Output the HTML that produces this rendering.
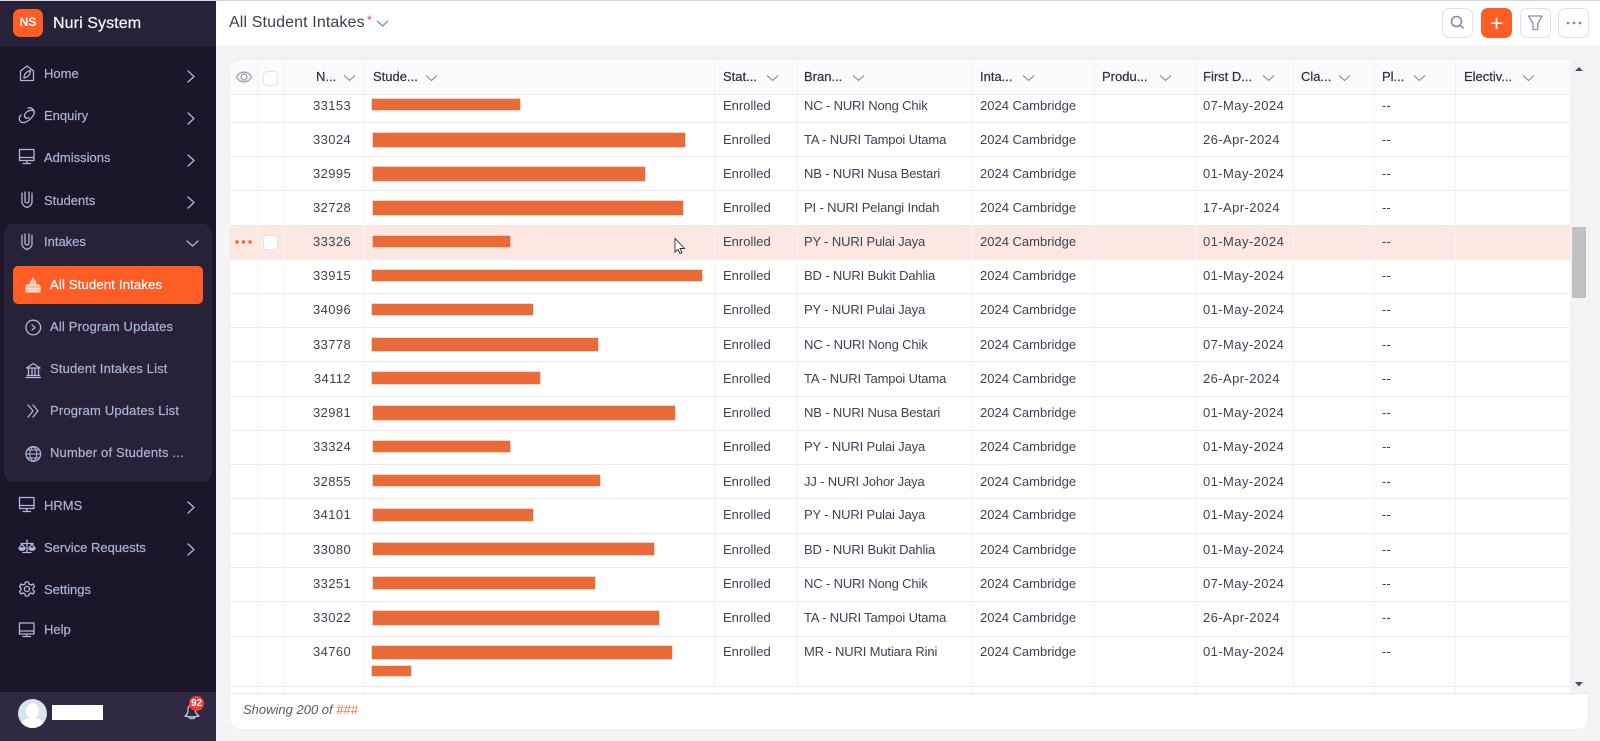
<!DOCTYPE html>
<html lang="en"><head><meta charset="utf-8"><title>All Student Intakes</title>
<style>
*{box-sizing:border-box}
html,body{margin:0;padding:0;width:1600px;height:741px;overflow:hidden;background:#f4f4f7;font-family:"Liberation Sans",sans-serif;font-size:13px;color:#3d4256}
.a{position:absolute}
#side{left:0;top:0;width:216px;height:741px;background:#1b1629}
#sh{left:0;top:1px;width:216px;height:45px;background:#282238}
#sf{left:0;top:692px;width:216px;height:49px;background:#2f2942}
#box{left:4px;top:224px;width:208px;height:258px;background:#282238;border-radius:9px}
#act{left:13px;top:266px;width:190px;height:38px;background:#ff5c26;border-radius:5px}
.m{position:absolute;left:44px;height:20px;line-height:20px;color:#a9b4d6;white-space:nowrap;-webkit-text-stroke:.2px #a9b4d6}
.m.s{left:50px;letter-spacing:.17px}
#logo{left:13px;top:9px;width:30px;height:28px;background:#ff5c26;border-radius:7px;color:#fff;font-weight:bold;font-size:12px;line-height:27px;text-align:center}
#brand{left:53px;top:14px;height:20px;line-height:20px;font-size:16px;letter-spacing:.1px;color:#f1f1f6;-webkit-text-stroke:.25px #f1f1f6;white-space:nowrap}
#top{left:216px;top:1px;width:1384px;height:44px;background:#fff}
#title{left:229px;top:13px;height:20px;line-height:20px;font-size:16px;letter-spacing:.12px;color:#3a3f50;white-space:nowrap}
#star{left:367px;top:14px;font-size:12px;line-height:12px;color:#f0453a}
.btn{position:absolute;top:8px;width:31px;height:30px;background:#fff;border:1px solid #dfe0e8;border-radius:7px}
#card{left:230px;top:60px;width:1358px;height:669px;background:#fff;border-radius:10px;box-shadow:0 0 0 1px #eeeef3;overflow:hidden}
#hd{left:230px;top:60px;width:1340px;height:34px;background:#fbfbfd;border-radius:10px 0 0 0}
#track{left:1570px;top:60px;width:18px;height:633px;background:#f3f3f6}
#thumb{left:1572px;top:227px;width:14px;height:71px;background:#c1c1c1}
#fl{left:230px;top:693px;width:1358px;height:1px;background:#e8e8ee}
#foot{left:243px;top:701px;height:18px;line-height:18px;font-style:italic;color:#555b6c;white-space:nowrap}
#foot span{color:#ff6a3c}
#hov{left:230px;top:225px;width:1340px;height:34px;background:#fde7e1}
.l{position:absolute;left:230px;width:1340px;height:1px;background:#ebebf0}
.v{position:absolute;top:60px;width:1px;height:633px;background:#f3f3f6}
.h{position:absolute;top:68px;height:18px;line-height:18px;color:#2c2f40;-webkit-text-stroke:.2px #2c2f40;white-space:nowrap}
.r{position:absolute;left:0;top:0;height:34px;line-height:34px;white-space:nowrap;color:#3d4256}
.r b{font-weight:normal;position:absolute;top:0}
.c1{left:313px;width:38px;text-align:right;letter-spacing:.4px}
.c2{left:723px}.c3{left:804px;letter-spacing:-.15px}.c4{left:980px}.c5{left:1203px;letter-spacing:.42px}.c6{left:1382px}
.bar{position:absolute;background:#e96b39;box-shadow:0 0 0 .5px #f5a98c}
.cb{position:absolute;left:263px;width:15px;height:15px;border:1px solid #e3e3ea;border-radius:4px;background:#fff}
#ava{left:18px;top:699px;width:29px;height:29px;border-radius:50%;background:#d8e3ea;overflow:hidden}
#ava i{position:absolute;left:8px;top:4px;width:13px;height:16px;border-radius:50%;background:#fff}
#ava u{position:absolute;left:3px;top:19px;width:23px;height:14px;border-radius:50% 50% 0 0;background:#fff}
#nm{left:52px;top:705px;width:51px;height:15px;background:#fff}
#bd{left:189px;top:696px;width:15px;height:15px;border-radius:50%;background:#f23d3d;color:#fff;font-size:10px;font-weight:bold;line-height:15px;text-align:center}
svg{position:absolute;left:0;top:0}
</style></head><body>
<div class="a" id="side"></div><div class="a" id="sh"></div><div class="a" id="sf"></div><div class="a" id="box"></div><div class="a" id="act"></div>
<div class="a" id="logo">NS</div><div class="a" id="brand">Nuri System</div>
<div class="m" style="top:64px">Home</div>
<div class="m" style="top:106px">Enquiry</div>
<div class="m" style="top:148px">Admissions</div>
<div class="m" style="top:191px">Students</div>
<div class="m" style="top:232px">Intakes</div>
<div class="m s" style="top:275px;color:#fff;-webkit-text-stroke:.25px #fff;letter-spacing:.2px">All Student Intakes</div>
<div class="m s" style="top:317px">All Program Updates</div>
<div class="m s" style="top:359px">Student Intakes List</div>
<div class="m s" style="top:401px">Program Updates List</div>
<div class="m s" style="top:443px">Number of Students ...</div>
<div class="m" style="top:496px">HRMS</div>
<div class="m" style="top:538px">Service Requests</div>
<div class="m" style="top:580px">Settings</div>
<div class="m" style="top:620px">Help</div>
<div class="a" id="ava"><i></i><u></u></div><div class="a" id="nm"></div>

<div class="a" id="top"></div>
<div class="a" id="title">All Student Intakes</div><div class="a" id="star">*</div>
<div class="btn" style="left:1442px"></div>
<div class="btn" style="left:1481px;background:#ff5c26;border-color:#ff5c26"></div>
<div class="btn" style="left:1520px"></div>
<div class="btn" style="left:1558px"></div>

<div class="a" id="card"></div>
<div class="a" id="hd"></div>
<div class="a" id="track"></div><div class="a" id="thumb"></div>
<div class="a" id="hov"></div>
<div class="l" style="top:94px"></div><div class="l" style="top:122px"></div><div class="l" style="top:156px"></div><div class="l" style="top:190px"></div><div class="l" style="top:225px"></div><div class="l" style="top:259px"></div><div class="l" style="top:293px"></div><div class="l" style="top:327px"></div><div class="l" style="top:361px"></div><div class="l" style="top:396px"></div><div class="l" style="top:430px"></div><div class="l" style="top:464px"></div><div class="l" style="top:498px"></div><div class="l" style="top:533px"></div><div class="l" style="top:567px"></div><div class="l" style="top:601px"></div><div class="l" style="top:636px"></div><div class="l" style="top:686px"></div>
<div class="v" style="left:257px"></div><div class="v" style="left:283px"></div><div class="v" style="left:364px"></div><div class="v" style="left:714px"></div><div class="v" style="left:797px"></div><div class="v" style="left:972px"></div><div class="v" style="left:1094px"></div><div class="v" style="left:1195px"></div><div class="v" style="left:1293px"></div><div class="v" style="left:1374px"></div><div class="v" style="left:1455px"></div>
<div class="a" id="fl"></div>
<div class="a" id="foot">Showing 200 of <span>###</span></div>

<div class="h" style="left:316px">N...</div>
<div class="h" style="left:373px">Stude...</div>
<div class="h" style="left:723px">Stat...</div>
<div class="h" style="left:804px">Bran...</div>
<div class="h" style="left:980px">Inta...</div>
<div class="h" style="left:1102px">Produ...</div>
<div class="h" style="left:1203px">First D...</div>
<div class="h" style="left:1301px">Cla...</div>
<div class="h" style="left:1382px">Pl...</div>
<div class="h" style="left:1464px">Electiv...</div>

<div class="cb" style="top:71px"></div>
<div class="cb" style="top:235px"></div>

<div class="r" style="top:89px"><b class="c1">33153</b><b class="c2">Enrolled</b><b class="c3">NC - NURI Nong Chik</b><b class="c4">2024 Cambridge</b><b class="c5">07-May-2024</b><b class="c6">--</b></div>
<div class="r" style="top:123px"><b class="c1">33024</b><b class="c2">Enrolled</b><b class="c3">TA - NURI Tampoi Utama</b><b class="c4">2024 Cambridge</b><b class="c5">26-Apr-2024</b><b class="c6">--</b></div>
<div class="r" style="top:157px"><b class="c1">32995</b><b class="c2">Enrolled</b><b class="c3">NB - NURI Nusa Bestari</b><b class="c4">2024 Cambridge</b><b class="c5">01-May-2024</b><b class="c6">--</b></div>
<div class="r" style="top:191px"><b class="c1">32728</b><b class="c2">Enrolled</b><b class="c3">PI - NURI Pelangi Indah</b><b class="c4">2024 Cambridge</b><b class="c5">17-Apr-2024</b><b class="c6">--</b></div>
<div class="r" style="top:225px"><b class="c1">33326</b><b class="c2">Enrolled</b><b class="c3">PY - NURI Pulai Jaya</b><b class="c4">2024 Cambridge</b><b class="c5">01-May-2024</b><b class="c6">--</b></div>
<div class="r" style="top:259px"><b class="c1">33915</b><b class="c2">Enrolled</b><b class="c3">BD - NURI Bukit Dahlia</b><b class="c4">2024 Cambridge</b><b class="c5">01-May-2024</b><b class="c6">--</b></div>
<div class="r" style="top:293px"><b class="c1">34096</b><b class="c2">Enrolled</b><b class="c3">PY - NURI Pulai Jaya</b><b class="c4">2024 Cambridge</b><b class="c5">01-May-2024</b><b class="c6">--</b></div>
<div class="r" style="top:328px"><b class="c1">33778</b><b class="c2">Enrolled</b><b class="c3">NC - NURI Nong Chik</b><b class="c4">2024 Cambridge</b><b class="c5">07-May-2024</b><b class="c6">--</b></div>
<div class="r" style="top:362px"><b class="c1">34112</b><b class="c2">Enrolled</b><b class="c3">TA - NURI Tampoi Utama</b><b class="c4">2024 Cambridge</b><b class="c5">26-Apr-2024</b><b class="c6">--</b></div>
<div class="r" style="top:396px"><b class="c1">32981</b><b class="c2">Enrolled</b><b class="c3">NB - NURI Nusa Bestari</b><b class="c4">2024 Cambridge</b><b class="c5">01-May-2024</b><b class="c6">--</b></div>
<div class="r" style="top:430px"><b class="c1">33324</b><b class="c2">Enrolled</b><b class="c3">PY - NURI Pulai Jaya</b><b class="c4">2024 Cambridge</b><b class="c5">01-May-2024</b><b class="c6">--</b></div>
<div class="r" style="top:465px"><b class="c1">32855</b><b class="c2">Enrolled</b><b class="c3">JJ - NURI Johor Jaya</b><b class="c4">2024 Cambridge</b><b class="c5">01-May-2024</b><b class="c6">--</b></div>
<div class="r" style="top:498px"><b class="c1">34101</b><b class="c2">Enrolled</b><b class="c3">PY - NURI Pulai Jaya</b><b class="c4">2024 Cambridge</b><b class="c5">01-May-2024</b><b class="c6">--</b></div>
<div class="r" style="top:533px"><b class="c1">33080</b><b class="c2">Enrolled</b><b class="c3">BD - NURI Bukit Dahlia</b><b class="c4">2024 Cambridge</b><b class="c5">01-May-2024</b><b class="c6">--</b></div>
<div class="r" style="top:567px"><b class="c1">33251</b><b class="c2">Enrolled</b><b class="c3">NC - NURI Nong Chik</b><b class="c4">2024 Cambridge</b><b class="c5">07-May-2024</b><b class="c6">--</b></div>
<div class="r" style="top:601px"><b class="c1">33022</b><b class="c2">Enrolled</b><b class="c3">TA - NURI Tampoi Utama</b><b class="c4">2024 Cambridge</b><b class="c5">26-Apr-2024</b><b class="c6">--</b></div>
<div class="r" style="top:635px"><b class="c1">34760</b><b class="c2">Enrolled</b><b class="c3">MR - NURI Mutiara Rini</b><b class="c4">2024 Cambridge</b><b class="c5">01-May-2024</b><b class="c6">--</b></div>

<div class="bar" style="left:372px;top:99px;width:148px;height:11px"></div>
<div class="bar" style="left:373px;top:133px;width:312px;height:14px"></div>
<div class="bar" style="left:373px;top:167px;width:272px;height:14px"></div>
<div class="bar" style="left:373px;top:201px;width:310px;height:14px"></div>
<div class="bar" style="left:373px;top:236px;width:137px;height:11px"></div>
<div class="bar" style="left:372px;top:270px;width:330px;height:11px"></div>
<div class="bar" style="left:372px;top:304px;width:161px;height:11px"></div>
<div class="bar" style="left:372px;top:338px;width:226px;height:13px"></div>
<div class="bar" style="left:372px;top:372px;width:168px;height:12px"></div>
<div class="bar" style="left:373px;top:406px;width:302px;height:14px"></div>
<div class="bar" style="left:373px;top:441px;width:137px;height:11px"></div>
<div class="bar" style="left:373px;top:475px;width:227px;height:11px"></div>
<div class="bar" style="left:373px;top:509px;width:160px;height:12px"></div>
<div class="bar" style="left:373px;top:543px;width:281px;height:12px"></div>
<div class="bar" style="left:373px;top:577px;width:222px;height:12px"></div>
<div class="bar" style="left:373px;top:611px;width:286px;height:14px"></div>
<div class="bar" style="left:372px;top:646px;width:300px;height:13px"></div>
<div class="bar" style="left:372px;top:666px;width:39px;height:10px"></div>

<svg width="1600" height="741" viewBox="0 0 1600 741" fill="none">
 <rect x="0" y="0" width="1600" height="1" fill="#d6d6dc"/>
 <!-- sidebar icons -->
 <g stroke="#aeb8da" stroke-width="1.3" stroke-linejoin="round" stroke-linecap="round">
  <path d="M20.500 80.500V71L27 66L33.500 71V80.500Z"/><path d="M24 78C24 74 26 72 30.500 70.500C30.500 75 28 77 24 78Z"/>
  <path d="M21 115C18 118 19 123 24 122.500C28 122 32 118 34 114C35 110 32 107 28 108M34 111C30 109 25 112 24.500 115.500C24.500 118 27 119 29 117.500"/>
  <path d="M19.500 149.500H34V160.500H19.500ZM19.500 157.500H34M26.800 160.500V163M23 163.500H30.500"/>
  <path d="M22 193V202C22 205 24.500 206.500 27 207.500C29.500 206.500 32 205 32 202V193M25 192V201C25 203.500 29 203.500 29 201V192"/>
  <path d="M22 235V244C22 247 24.500 248.500 27 249.500C29.500 248.500 32 247 32 244V235M25 234V243C25 245.500 29 245.500 29 243V234"/>
  <path d="M19.500 497.500H34V508.500H19.500ZM19.500 505.500H34M26.800 508.500V511M23 511.500H30.500"/>
  <path d="M27 540V552M23 552.500H31M21 543.500H33M22 544L19 548M22 544L25 548M32 544L29 548M32 544L35 548"/>
  <path d="M19 548H25C25 551 19 551 19 548ZM29 548H35C35 551 29 551 29 548Z" fill="#aeb8da"/>
  <circle cx="27" cy="589" r="2.600"/><path d="M25.500 582H28.500L29 584L31 585L33 584L34.500 586.500L33 588L33 590L34.500 591.500L33 594L31 593L29 594L28.500 596H25.500L25 594L23 593L21 594L19.500 591.500L21 590L21 588L19.500 586.500L21 584L23 585L25 584Z"/>
  <path d="M19.500 623H34V634H19.500ZM19.500 631H34M26.800 634V636M23 636.500H30.500"/>
  <circle cx="33.300" cy="327.500" r="7.300"/><path d="M32 325L35 327.500L32 330"/>
  <path d="M26.500 368L33.300 363.500L40 368ZM28.500 369V375M32 369V375M35 369V375M38.500 369V375M27 375.500H39.500M26 377.500H40.500"/>
  <path d="M28 405L33 411L28 417M33 405L38 411L33 417"/>
  <circle cx="33.300" cy="454" r="7.300"/><path d="M26 454H40.500M33.300 446.700C28.500 450 28.500 458 33.300 461.300C38 458 38 450 33.300 446.700M27.500 450H39M27.500 458H39" stroke-width="1"/>
  <path d="M188 71L194 76.500L188 82M188 113L194 118.500L188 124M188 155L194 160.500L188 166M188 197L194 202.500L188 208M188 502L194 507.500L188 513M188 544L194 549.500L188 555"/>
  <path d="M187 241L192.500 246L198 241"/>
 </g>
 <g stroke="#ffe3d8" stroke-width="1.200" stroke-linejoin="round">
  <path d="M30.500 285V282L33 279L35.500 282V285M33 277.500V279" fill="#ffb79e"/>
  <path d="M27 285H39L40 287V292H26V287ZM26 288.500H40M29 290.500H37" fill="#ffb79e"/>
 </g>
 <!-- bell -->
 <g stroke="#cfd5e6" stroke-width="1.200" stroke-linejoin="round"><path d="M185 716C188 714 188 712 188 709C188 706 190 705 191 705C193 705 195 707 195 709C195 712 196 714 199 716C195 717 189 717 185 716ZM189 717.500C190 719 194 719 195 717.500"/></g>
 <!-- title chevron -->
 <path d="M377 21L382.500 26L388 21" stroke="#70758a" stroke-width="1.100"/>
 <!-- top buttons -->
 <circle cx="1456.500" cy="21.500" r="5" stroke="#7c89a2" stroke-width="1.500"/><path d="M1460 25L1463.500 28.500" stroke="#7c89a2" stroke-width="1.500"/>
 <path d="M1496.500 17.500V29M1491 23.200H1502.500" stroke="#fff" stroke-width="1.700"/>
 <path d="M1528.500 16H1542L1537.800 23.500V29.500H1533V23.500Z" stroke="#8290a8" stroke-width="1.300" stroke-linejoin="round"/>
 <circle cx="1568" cy="23" r="1.400" fill="#8a8fa0"/><circle cx="1574" cy="23" r="1.400" fill="#8a8fa0"/><circle cx="1580" cy="23" r="1.400" fill="#8a8fa0"/>
 <!-- eye -->
 <path d="M236.500 77C240 70.500 248 70.500 251.500 77C248 83.500 240 83.500 236.500 77Z" stroke="#a4a9b9" stroke-width="1.400"/><circle cx="244" cy="77" r="3" stroke="#a4a9b9" stroke-width="1.400"/>
 <!-- header chevrons -->
 <g stroke="#7a7f92" stroke-width="1">
  <path d="M344 75.500L349.500 80.500L355 75.500M426 75.500L431.500 80.500L437 75.500M767 75.500L772.500 80.500L778 75.500M853 75.500L858.500 80.500L864 75.500M1023 75.500L1028.500 80.500L1034 75.500M1160 75.500L1165.500 80.500L1171 75.500M1263 75.500L1268.500 80.500L1274 75.500M1339 75.500L1344.500 80.500L1350 75.500M1414 75.500L1419.500 80.500L1425 75.500M1523 75.500L1528.500 80.500L1534 75.500"/>
 </g>
 <!-- row dots -->
 <circle cx="237" cy="242" r="1.700" fill="#ff5c26"/><circle cx="243.500" cy="242" r="1.700" fill="#ff5c26"/><circle cx="250" cy="242" r="1.700" fill="#ff5c26"/>
 <!-- scroll arrows -->
 <path d="M1575 71L1579 67L1583 71Z" fill="#4d4860"/><path d="M1575 682L1579 686.500L1583 682Z" fill="#4d4860"/>
 <!-- cursor -->
 <path d="M675 238.500V252L678 249.500L680 253.500L682 252.500L680 248.500L684.500 248.500Z" fill="#fff" stroke="#2b2b3a" stroke-width=".9"/>
</svg>
<div class="a" id="bd">92</div>
</body></html>
